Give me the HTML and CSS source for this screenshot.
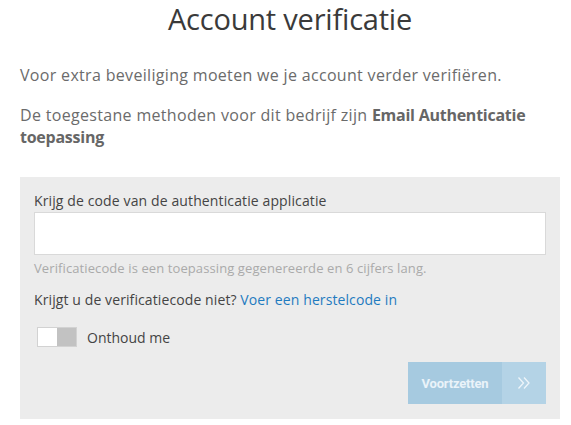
FILE: index.html
```html
<!DOCTYPE html>
<html lang="nl">
<head>
<meta charset="utf-8">
<title>Account verificatie</title>
<link rel="stylesheet" href="styles.css">
</head>
<body>
<main class="page">
  <h1 class="title">Account verificatie</h1>
  <p class="intro">Voor extra beveiliging moeten we je account verder verifiëren.</p>
  <p class="intro methods">De toegestane methoden voor dit bedrijf zijn <strong>Email Authenticatie toepassing</strong></p>
  <form class="panel">
    <label class="label" for="code">Krijg de code van de authenticatie applicatie</label>
    <input class="input" id="code" type="text">
    <p class="hint">Verificatiecode is een toepassing gegenereerde en 6 cijfers lang.</p>
    <p class="recover">Krijgt u de verificatiecode niet? <a class="link" href="#">Voer een herstelcode in</a></p>
    <div class="remember">
      <span class="toggle"><span class="knob"></span></span>
      <span class="remember-text">Onthoud me</span>
    </div>
    <div class="actions">
      <button class="btn" type="button">
        <span class="btn-text">Voortzetten</span>
        <span class="btn-icon">
          <svg width="14" height="14" viewBox="0 0 14 14" aria-hidden="true">
            <path d="M1.5 1.5 L6.5 7 L1.5 12.5 M7 1.5 L12 7 L7 12.5" fill="none" stroke="#eef5fa" stroke-width="1.3"/>
          </svg>
        </span>
      </button>
    </div>
  </form>
</main>
</body>
</html>
```
FILE: styles.css
```css
html, body {
  margin: 0;
  padding: 0;
  background: #fff;
}
body {
  font-family: "Open Sans", "Noto Sans", sans-serif;
  color: #666;
}
.page {
  padding: 0 20px;
  width: 540px;
}
.title {
  margin: 0;
  font-size: 29px;
  font-weight: 400;
  line-height: 38px;
  color: #3a3a3a;
  text-align: center;
  letter-spacing: -0.2px;
}
.intro {
  margin: 26px 0 0 0;
  font-size: 16px;
  line-height: 22px;
  color: #6b6b6b;
  letter-spacing: 0.32px;
}
.methods {
  margin-top: 18px;
}
.methods strong {
  font-weight: 700;
  color: #666;
  letter-spacing: -0.25px;
}
.panel {
  margin-top: 29px;
  background: #ececec;
  padding: 14px 14px 15px 14px;
  display: flex;
  flex-direction: column;
}
.label {
  font-size: 14px;
  line-height: 20px;
  color: #444;
  letter-spacing: 0.12px;
}
.input {
  margin: 1px 0 0 0;
  height: 43px;
  box-sizing: border-box;
  border: 1px solid #d9d9d9;
  background: #fff;
  padding: 0 10px;
  font: inherit;
}
.hint {
  margin: 3px 0 0 0;
  font-size: 13px;
  line-height: 20px;
  color: #aaa;
  letter-spacing: 0.1px;
}
.recover {
  margin: 12px 0 0 0;
  font-size: 14px;
  line-height: 20px;
  color: #444;
  letter-spacing: 0.1px;
}
.link {
  color: #1f7bc0;
  text-decoration: none;
}
.remember {
  margin-top: 17px;
  display: flex;
  align-items: center;
  gap: 10px;
  padding-left: 3px;
}
.toggle {
  width: 40px;
  height: 20px;
  box-sizing: border-box;
  border: 1px solid #d2d2d2;
  background: #c2c2c2;
  display: flex;
}
.knob {
  width: 19px;
  height: 100%;
  background: #fff;
}
.remember-text {
  font-size: 14px;
  color: #444;
}
.actions {
  margin-top: 15px;
  display: flex;
  justify-content: flex-end;
}
.btn {
  display: flex;
  height: 42px;
  border: 0;
  padding: 0;
  background: transparent;
  cursor: pointer;
}
.btn-text {
  width: 94px;
  height: 100%;
  background: #a6cae0;
  color: #eaf3f9;
  font-family: Roboto, "Open Sans", sans-serif;
  font-size: 13px;
  font-weight: 700;
  letter-spacing: -0.2px;
  display: flex;
  align-items: center;
  justify-content: center;
}
.btn-icon {
  width: 44px;
  height: 100%;
  background: #b4d3e6;
  display: flex;
  align-items: center;
  justify-content: center;
}
```
